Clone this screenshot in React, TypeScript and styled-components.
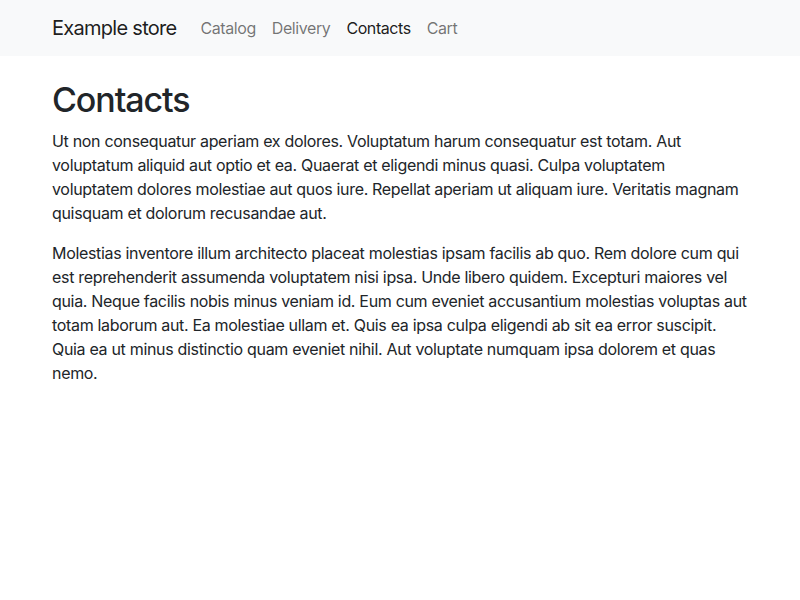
import React from "react";
import styled, { createGlobalStyle } from "styled-components";

const GlobalStyle = createGlobalStyle`
  *, *::before, *::after { box-sizing: border-box; }
  body {
    margin: 0;
    font-family: Inter, "Noto Sans", "Liberation Sans", sans-serif;
    font-size: 16px;
    font-weight: 400;
    line-height: 1.5;
    letter-spacing: -0.02em;
    color: #212529;
    background: #fff;
    -webkit-font-smoothing: antialiased;
  }
`;

const Navbar = styled.nav`
  background: #f8f9fa;
  padding: 8px 0;
`;

const Container = styled.div`
  max-width: 720px;
  margin: 0 auto;
  padding: 0 12px;
`;

const NavInner = styled(Container)`
  display: flex;
  align-items: center;
`;

const Brand = styled.a`
  font-size: 20px;
  line-height: 30px;
  letter-spacing: -0.036em;
  padding: 5px 0;
  margin-right: 16px;
  color: rgba(0, 0, 0, 0.9);
  text-decoration: none;
`;

const NavList = styled.ul`
  display: flex;
  list-style: none;
  margin: 0;
  padding: 0;
`;

const NavLink = styled.a<{ $active?: boolean }>`
  display: block;
  padding: 8px;
  line-height: 24px;
  letter-spacing: -0.026em;
  color: ${(p) => (p.$active ? "rgba(0, 0, 0, 0.9)" : "rgba(0, 0, 0, 0.55)")};
  text-decoration: none;
`;

const Main = styled(Container)`
  margin-top: 24px;
`;

const Title = styled.h1`
  font-size: 34px;
  font-weight: 500;
  line-height: 1.2;
  letter-spacing: -0.032em;
  margin: 0 0 8px;
`;

const Para = styled.p`
  margin: 0 0 16px;
`;

const links = [
  { label: "Catalog" },
  { label: "Delivery" },
  { label: "Contacts", active: true },
  { label: "Cart" },
];

export default function App() {
  return (
    <>
      <GlobalStyle />
      <Navbar>
        <NavInner>
          <Brand href="#">Example store</Brand>
          <NavList>
            {links.map((l) => (
              <li key={l.label}>
                <NavLink href="#" $active={l.active}>
                  {l.label}
                </NavLink>
              </li>
            ))}
          </NavList>
        </NavInner>
      </Navbar>
      <Main>
        <Title>Contacts</Title>
        <Para>
          Ut non consequatur aperiam ex dolores. Voluptatum harum consequatur est totam. Aut
          voluptatum aliquid aut optio et ea. Quaerat et eligendi minus quasi. Culpa voluptatem
          voluptatem dolores molestiae aut quos iure. Repellat aperiam ut aliquam iure. Veritatis
          magnam quisquam et dolorum recusandae aut.
        </Para>
        <Para>
          Molestias inventore illum architecto placeat molestias ipsam facilis ab quo. Rem dolore
          cum qui est reprehenderit assumenda voluptatem nisi ipsa. Unde libero quidem. Excepturi
          maiores vel quia. Neque facilis nobis minus veniam id. Eum cum eveniet accusantium
          molestias voluptas aut totam laborum aut. Ea molestiae ullam et. Quis ea ipsa culpa
          eligendi ab sit ea error suscipit. Quia ea ut minus distinctio quam eveniet nihil. Aut
          voluptate numquam ipsa dolorem et quas nemo.
        </Para>
      </Main>
    </>
  );
}
